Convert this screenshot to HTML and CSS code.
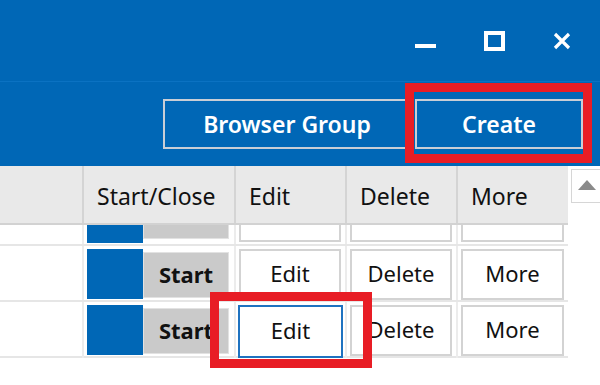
FILE: index.html
```html
<!DOCTYPE html>
<html lang="en">
<head>
    <meta charset="UTF-8">
    <meta name="viewport" content="width=device-width, initial-scale=1.0">
    <title>Browser Manager</title>
    <link rel="stylesheet" href="styles.css">
</head>
<body>
    <div class="app">
        <div class="titlebar">
            <span class="win-btn win-min"></span>
            <span class="win-btn win-max"></span>
            <span class="win-btn win-close">
                <svg width="18" height="18" viewBox="0 0 18 18">
                    <path d="M2 2 L16 16 M16 2 L2 16" stroke="#fff" stroke-width="3.2" fill="none"/>
                </svg>
            </span>
        </div>

        <div class="toolbar">
            <button class="tool-btn group-btn">Browser Group</button>
            <button class="tool-btn create-btn">Create</button>
        </div>

        <div class="grid-wrap">
            <div class="grid">
                <div class="grid-head">
                    <div class="hcell"></div>
                    <div class="hcell">Start/Close</div>
                    <div class="hcell">Edit</div>
                    <div class="hcell">Delete</div>
                    <div class="hcell">More</div>
                </div>
                <div class="grid-body">
                    <!-- row scrolled mostly out of view -->
                    <div class="row row-scrolled">
                        <div class="cell"></div>
                        <div class="cell"><div class="start"><span class="start-color"></span><span class="start-btn"></span></div></div>
                        <div class="cell"><span class="cell-btn"></span></div>
                        <div class="cell"><span class="cell-btn"></span></div>
                        <div class="cell"><span class="cell-btn"></span></div>
                    </div>
                    <div class="row">
                        <div class="cell"></div>
                        <div class="cell"><div class="start"><span class="start-color"></span><span class="start-btn">Start</span></div></div>
                        <div class="cell"><span class="cell-btn">Edit</span></div>
                        <div class="cell"><span class="cell-btn">Delete</span></div>
                        <div class="cell"><span class="cell-btn">More</span></div>
                    </div>
                    <div class="row">
                        <div class="cell"></div>
                        <div class="cell"><div class="start"><span class="start-color"></span><span class="start-btn">Start</span></div></div>
                        <div class="cell"><span class="cell-btn focused">Edit</span></div>
                        <div class="cell"><span class="cell-btn">Delete</span></div>
                        <div class="cell"><span class="cell-btn">More</span></div>
                    </div>
                </div>
            </div>
            <div class="scrollbar">
                <span class="scroll-up"></span>
            </div>
        </div>

        <!-- annotation boxes -->
        <div class="mark mark-create"></div>
        <div class="mark mark-edit"></div>
    </div>
</body>
</html>
```

FILE: styles.css
```css
body {
    margin: 0;
    font-family: "Noto Sans", "Open Sans", sans-serif;
    background: #fff;
}
.app {
    position: relative;
    width: 600px;
    height: 385px;
    overflow: hidden;
}

/* title bar */
.titlebar {
    height: 81px;
    background-color: #0067b6;
    display: flex;
    justify-content: flex-end;
    align-items: center;
    padding-right: 29px;
    gap: 48px;
    box-sizing: border-box;
}
.win-btn {
    display: block;
    width: 21px;
    height: 20px;
    position: relative;
}
.win-min::after {
    content: "";
    position: absolute;
    left: 0;
    right: 0;
    top: 13px;
    height: 4px;
    background: #fff;
}
.win-max {
    border: 4px solid #fff;
    width: 13px;
    height: 12px;
}
.win-close {
    width: 18px;
    height: 18px;
}

/* toolbar */
.toolbar {
    height: 85px;
    background-color: #0067b6;
    border-top: 1px solid #0b72c2;
    display: flex;
    justify-content: flex-end;
    align-items: flex-start;
    padding: 17px 17px 0 0;
    gap: 4px;
    box-sizing: border-box;
}
.tool-btn {
    height: 50px;
    background: transparent;
    border: 2px solid #c9ced6;
    color: #fff;
    font-family: "Noto Sans", sans-serif;
    font-size: 23px;
    font-weight: 600;
    padding: 0;
}
.group-btn {
    width: 248px;
}
.create-btn {
    width: 168px;
}

/* grid */
.grid-wrap {
    display: flex;
}
.grid {
    width: 568px;
}
.grid-head, .row {
    display: grid;
    grid-template-columns: 84px 152px 111px 111px 110px;
}
.grid-head {
    height: 59px;
    background-color: #e9e9e9;
    border-bottom: 2px solid #d2d2d2;
    box-sizing: border-box;
}
.hcell {
    display: flex;
    align-items: center;
    padding-left: 13px;
    border-right: 2px solid #d4d4d4;
    font-size: 23px;
    color: #111;
    box-sizing: border-box;
    padding-top: 3px;
}
.hcell:first-child {
    padding-left: 0;
}
.hcell:last-child {
    border-right: none;
}
.grid-body {
    height: 133px;
    overflow: hidden;
}
.row {
    height: 56px;
    border-bottom: 2px solid #e6e6e6;
    box-sizing: border-box;
}
.row-scrolled {
    margin-top: -35px;
}
.row-scrolled .cell-btn {
    height: 49px;
}
.row-scrolled .start-btn {
    height: 43px;
}
.cell {
    border-right: 2px solid #ececec;
    padding: 3px 4px 0 3px;
    box-sizing: border-box;
}
.cell:first-child {
    padding: 0;
}
.cell:last-child {
    border-right: none;
}
.start {
    display: flex;
    height: 50px;
}
.start-color {
    width: 56px;
    background-color: #0067b6;
}
.start-btn {
    width: 86px;
    height: 46px;
    margin-top: 3px;
    background-color: #cacaca;
    border: 1px solid #e2e2e2;
    box-sizing: border-box;
    font-size: 22px;
    font-weight: 700;
    color: #111;
    display: flex;
    align-items: center;
    justify-content: center;
    padding-bottom: 2px;
}
.cell-btn {
    display: flex;
    align-items: center;
    justify-content: center;
    height: 51px;
    background: #fff;
    border: 2px solid #d3d3d3;
    box-sizing: border-box;
    font-size: 22px;
    color: #111;
    padding-bottom: 4px;
}
.cell-btn.focused {
    border-color: #1e72c0;
    height: 53px;
    margin: 0 -2px 0 -1px;
}

/* scrollbar */
.scrollbar {
    flex: 1;
    padding: 3px 0 0 3px;
}
.scroll-up {
    display: block;
    height: 34px;
    border: 1px solid #d6d6d6;
    border-right: none;
    box-sizing: border-box;
    position: relative;
}
.scroll-up::after {
    content: "";
    position: absolute;
    left: 6px;
    top: 10px;
    border-left: 9px solid transparent;
    border-right: 9px solid transparent;
    border-bottom: 10px solid #8a8a8a;
}

/* red highlight marks */
.mark {
    position: absolute;
    border: 9px solid #e81d25;
    box-sizing: border-box;
}
.mark-create {
    left: 405px;
    top: 83px;
    width: 187px;
    height: 80px;
}
.mark-edit {
    left: 210px;
    top: 292px;
    width: 162px;
    height: 76px;
}
```
